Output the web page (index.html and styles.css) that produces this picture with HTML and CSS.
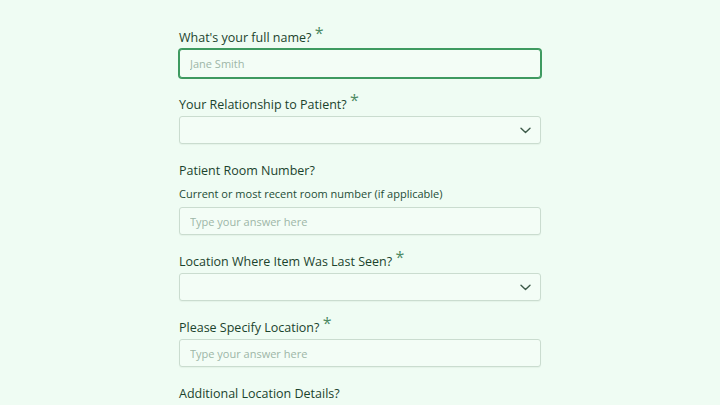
FILE: index.html
```html
<!DOCTYPE html>
<html lang="en">
<head>
<meta charset="utf-8">
<title>Lost Item Form</title>
<link rel="stylesheet" href="styles.css">
</head>
<body>
<form class="form">
  <div class="field">
    <label class="label">What's your full name? <span class="req">*</span></label>
    <input class="input input-focus" type="text" placeholder="Jane Smith">
  </div>
  <div class="field">
    <label class="label">Your Relationship to Patient? <span class="req">*</span></label>
    <div class="select">
      <svg class="chev" width="11" height="7" viewBox="0 0 11 7"><path d="M1 1.2 L5.5 5.5 L10 1.2" fill="none" stroke="#3d5a49" stroke-width="1.4" stroke-linecap="round" stroke-linejoin="round"/></svg>
    </div>
  </div>
  <div class="field">
    <label class="label">Patient Room Number?</label>
    <p class="desc">Current or most recent room number (if applicable)</p>
    <input class="input" type="text" placeholder="Type your answer here">
  </div>
  <div class="field">
    <label class="label">Location Where Item Was Last Seen? <span class="req">*</span></label>
    <div class="select">
      <svg class="chev" width="11" height="7" viewBox="0 0 11 7"><path d="M1 1.2 L5.5 5.5 L10 1.2" fill="none" stroke="#3d5a49" stroke-width="1.4" stroke-linecap="round" stroke-linejoin="round"/></svg>
    </div>
  </div>
  <div class="field">
    <label class="label">Please Specify Location? <span class="req">*</span></label>
    <input class="input" type="text" placeholder="Type your answer here">
  </div>
  <div class="field">
    <label class="label">Additional Location Details?</label>
  </div>
</form>
</body>
</html>
```

FILE: styles.css
```css
html, body {
  margin: 0;
  padding: 0;
  background: #effcf3;
  font-family: "Open Sans", "Noto Sans", sans-serif;
  color: #1d4630;
}

.form {
  width: 362px;
  margin: 0 auto;
  padding-top: 28px;
}

.field {
  display: flex;
  flex-direction: column;
  margin-bottom: 17px;
}

.label {
  font-size: 12.5px;
  line-height: 20px;
  font-weight: 500;
  margin-bottom: 1px;
  color: #1b432d;
}

.req {
  font-size: 16px;
  color: #4d8a63;
  font-weight: 400;
  position: relative;
  top: -3px;
  line-height: 0;
}

.desc {
  margin: 4px 0 5px;
  font-size: 11px;
  line-height: 16px;
  color: #244c36;
}

.input,
.select {
  box-sizing: border-box;
  height: 28px;
  width: 100%;
  border: 1px solid #cadccf;
  border-radius: 3px;
  background: #f3fdf6;
  padding: 0 10px;
  font-family: "Open Sans", "Noto Sans", sans-serif;
  font-size: 11px;
  color: #1d4630;
  outline: none;
  box-shadow: 0 1px 1px rgba(60, 100, 75, 0.06);
}

.input::placeholder {
  color: #9db6a7;
}

.input-focus {
  height: 29px;
  border: 1px solid #3e9a60;
  box-shadow: 0 0 0 1px #3e9a60;
}

.select {
  display: flex;
  align-items: center;
  justify-content: flex-end;
  padding-right: 9px;
}
```
